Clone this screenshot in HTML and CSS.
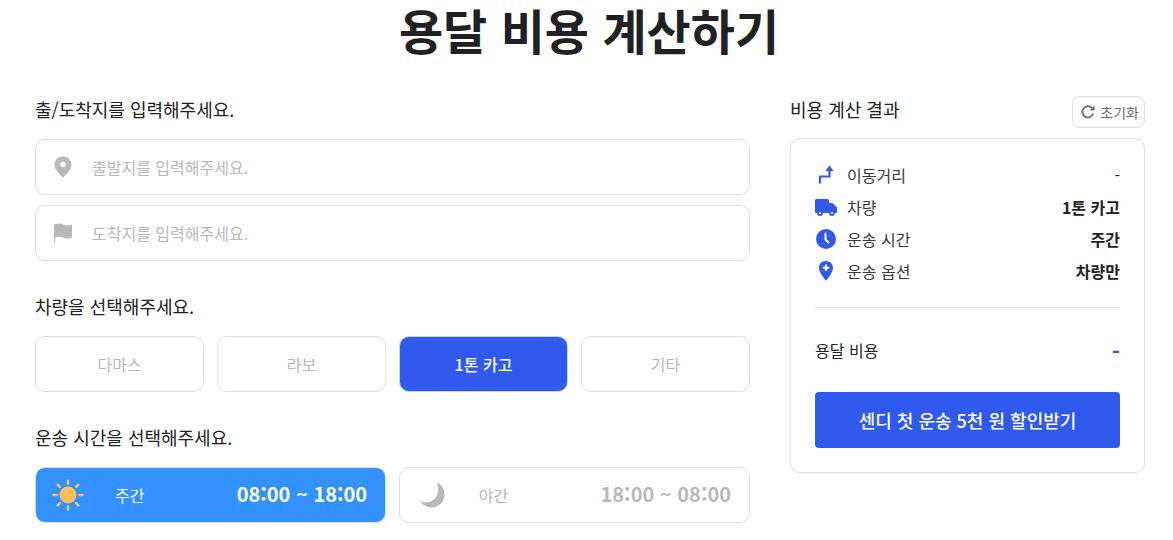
FILE: index.html
```html
<!DOCTYPE html>
<html lang="ko">
<head>
<meta charset="utf-8">
<title>용달 비용 계산하기</title>
<link rel="stylesheet" href="styles.css">
</head>
<body>
<h1 class="title">용달 비용 계산하기</h1>
<main class="layout">
  <section class="form">
    <h2 class="label">출/도착지를 입력해주세요.</h2>
    <div class="field">
      <svg class="field-icon" viewBox="0 0 20 24"><path fill="#b9b9bb" fill-rule="evenodd" d="M10 1.500C4.800 1.500 1.500 5.300 1.500 9.600c0 4.600 4.300 9.300 8.500 13 4.200-3.700 8.500-8.400 8.500-13C18.500 5.300 15.200 1.500 10 1.500zM10 12a2.600 2.600 0 1 1 0-5.200A2.600 2.600 0 0 1 10 12z"/></svg>
      <span class="placeholder">출발지를 입력해주세요.</span>
    </div>
    <div class="field">
      <svg class="field-icon" viewBox="0 0 20 24"><path fill="#b9b9bb" d="M1 3h1.200v.6C5 2.100 8 2.500 10.500 3.500c2.500 1 5 1.300 8.500 0v13c-3.500 1.500-6 1.200-8.500.2-2.500-1-5.500-1.300-8.300 0V22H1z"/></svg>
      <span class="placeholder">도착지를 입력해주세요.</span>
    </div>

    <h2 class="label label-vehicle">차량을 선택해주세요.</h2>
    <div class="vehicles">
      <button class="choice">다마스</button>
      <button class="choice">라보</button>
      <button class="choice choice-on">1톤 카고</button>
      <button class="choice">기타</button>
    </div>

    <h2 class="label label-time">운송 시간을 선택해주세요.</h2>
    <div class="times">
      <div class="time time-on">
        <svg class="time-icon" viewBox="0 0 32 32">
          <circle cx="16" cy="16" r="8.500" fill="#ffc05c"/>
          <g stroke="#ffc05c" stroke-width="2.400" stroke-linecap="round">
            <path d="M16 1.500v3M16 27.500v3M1.500 16h3M27.500 16h3M5.700 5.700l2.100 2.100M24.200 24.200l2.100 2.100M5.700 26.300l2.100-2.100M24.200 7.800l2.100-2.100"/>
          </g>
        </svg>
        <span class="time-name">주간</span>
        <span class="time-range">08:00 ~ 18:00</span>
      </div>
      <div class="time">
        <svg class="time-icon" viewBox="0 0 32 32"><path fill="#b9b9bb" d="M21 3.500C25.500 5.500 28.500 10 28.500 15.500 28.500 23 22.500 28.500 15.500 28.500 10.500 28.500 6 25.500 4 21.500c2 1.500 4.500 2 7 1.800 6-.5 11-5.300 11-11.300 0-3-.2-6-1-8.500z"/></svg>
        <span class="time-name">야간</span>
        <span class="time-range">18:00 ~ 08:00</span>
      </div>
    </div>
  </section>

  <aside class="result">
    <div class="result-head">
      <h2 class="label">비용 계산 결과</h2>
      <button class="reset">
        <svg class="reset-icon" viewBox="0 0 16 16"><path fill="none" stroke="#6e6e70" stroke-width="1.800" d="M13.300 9.500A5.600 5.600 0 1 1 12 4"/><path fill="#6e6e70" d="M14.500 1.500v5h-5z"/></svg>
        <span>초기화</span>
      </button>
    </div>
    <div class="card">
      <ul class="rows">
        <li class="row">
          <svg class="row-icon" viewBox="0 0 22 22"><path fill="none" stroke="#3059ee" stroke-width="2.200" d="M5 19.500v-7h9.500V6"/><path fill="#3059ee" d="M14.500 1.500l4 5.500h-8z"/></svg>
          <span class="row-name">이동거리</span><span class="row-value row-plain">-</span>
        </li>
        <li class="row">
          <svg class="row-icon" viewBox="0 0 22 22"><path fill="#3059ee" d="M0 4.500A1.500 1.500 0 0 1 1.500 3h11A1.500 1.500 0 0 1 14 4.500V7h3.500l4.500 4.500V16a1 1 0 0 1-1 1H1a1 1 0 0 1-1-1z"/><circle cx="5" cy="17" r="3" fill="#3059ee"/><circle cx="17" cy="17" r="3" fill="#3059ee"/><circle cx="5" cy="17" r="1.100" fill="#fff"/><circle cx="17" cy="17" r="1.100" fill="#fff"/></svg>
          <span class="row-name">차량</span><span class="row-value">1톤 카고</span>
        </li>
        <li class="row">
          <svg class="row-icon" viewBox="0 0 22 22"><circle cx="11" cy="11" r="10" fill="#3059ee"/><path fill="none" stroke="#fff" stroke-width="2" stroke-linecap="round" d="M10.500 5.500v6l3 3"/></svg>
          <span class="row-name">운송 시간</span><span class="row-value">주간</span>
        </li>
        <li class="row">
          <svg class="row-icon" viewBox="0 0 22 22"><path fill="#3059ee" d="M11 1C6.500 1 4 4.200 4 7.800c0 4.500 4 9 7 13 3-4 7-8.500 7-13C18 4.200 15.500 1 11 1z"/><path stroke="#fff" stroke-width="2" d="M11 4.500v6.500M7.800 7.800h6.400"/></svg>
          <span class="row-name">운송 옵션</span><span class="row-value">차량만</span>
        </li>
      </ul>
      <div class="cost">
        <span class="cost-name">용달 비용</span><span class="cost-value">-</span>
      </div>
      <button class="cta">센디 첫 운송 5천 원 할인받기</button>
    </div>
  </aside>
</main>
</body>
</html>
```
FILE: styles.css
```css
* { box-sizing: border-box; }
html, body { margin: 0; padding: 0; }
body {
  background: #fff;
  color: #212124;
  font-family: "Noto Sans CJK KR", "Noto Sans", sans-serif;
  height: 540px;
  overflow: hidden;
}
button { font-family: inherit; cursor: pointer; }
.title {
  margin: 0;
  padding-left: 5px;
  height: 62px;
  line-height: 58px;
  text-align: center;
  font-size: 48px;
  font-weight: 700;
  color: #212124;
}
.layout {
  display: flex;
  gap: 40px;
  padding: 28px 28px 0 35px;
}
.form { width: 715px; }
.result { width: 355px; }
.label {
  margin: 0;
  font-size: 18px;
  line-height: 38px;
  height: 49px;
  font-weight: 400;
  color: #212124;
}
.field {
  display: flex;
  align-items: center;
  height: 56px;
  margin-bottom: 10px;
  padding-left: 17px;
  border: 1px solid #e0e0e2;
  border-radius: 10px;
}
.field-icon { width: 20px; height: 24px; flex: none; }
.placeholder { margin-left: 19px; font-size: 16px; color: #b9b9bb; }
.label-vehicle { margin-top: 26px; }
.vehicles { display: flex; justify-content: space-between; gap: 12.67px; }
.choice {
  flex: 1;
  height: 56px;
  background: #fff;
  border: 1px solid #e0e0e2;
  border-radius: 10px;
  color: #b9b9bb;
  font-size: 16px;
}
.choice-on { background: #3059ee; border-color: #c8d2f5; color: #fff; font-weight: 500; }
.label-time { margin-top: 26px; }
.times { display: flex; gap: 12.67px; }
.time {
  flex: 1;
  display: flex;
  align-items: center;
  height: 56px;
  padding: 0 18px 0 16px;
  border: 1px solid #e0e0e2;
  border-radius: 10px;
  color: #b9b9bb;
}
.time-on { background: #3392ff; border-color: #d5e6fb; color: #fff; }
.time-icon { width: 32px; height: 32px; flex: none; }
.time-name { margin-left: 31px; font-size: 16px; }
.time-range { margin-left: auto; font-size: 20px; font-weight: 700; line-height: 26px; padding-bottom: 2px; }
.result-head { display: flex; justify-content: space-between; align-items: flex-start; height: 38px; }
.reset {
  display: flex;
  align-items: center;
  gap: 4px;
  height: 32px;
  margin-top: 6px;
  padding: 0 5px 0 7px;
  background: #fff;
  border: 1px solid #e0e0e2;
  border-radius: 8px;
  color: #6e6e70;
  font-size: 14px;
}
.reset-icon { width: 16px; height: 16px; }
.card {
  height: 335px;
  margin-top: 10px;
  padding: 20px 24px 0;
  border: 1px solid #e0e0e2;
  border-radius: 10px;
}
.rows { list-style: none; margin: 0; padding: 0 0 20px; border-bottom: 1px solid #e0e0e2; }
.row { display: flex; align-items: center; height: 32px; font-size: 16px; }
.row-icon { width: 22px; height: 22px; flex: none; margin-right: 10px; }
.row-name { color: #3a3a3d; }
.row-value { margin-left: auto; font-weight: 700; color: #212124; }
.row-plain { font-weight: 400; }
.cost { display: flex; justify-content: space-between; align-items: center; height: 84px; font-size: 16px; }
.cost-value { color: #3059ee; font-size: 22px; font-weight: 700; }
.cta {
  display: block;
  width: 100%;
  height: 56px;
  background: #3059ee;
  border: 0;
  border-radius: 4px;
  color: #fff;
  font-size: 18px;
  font-weight: 500;
}
```
